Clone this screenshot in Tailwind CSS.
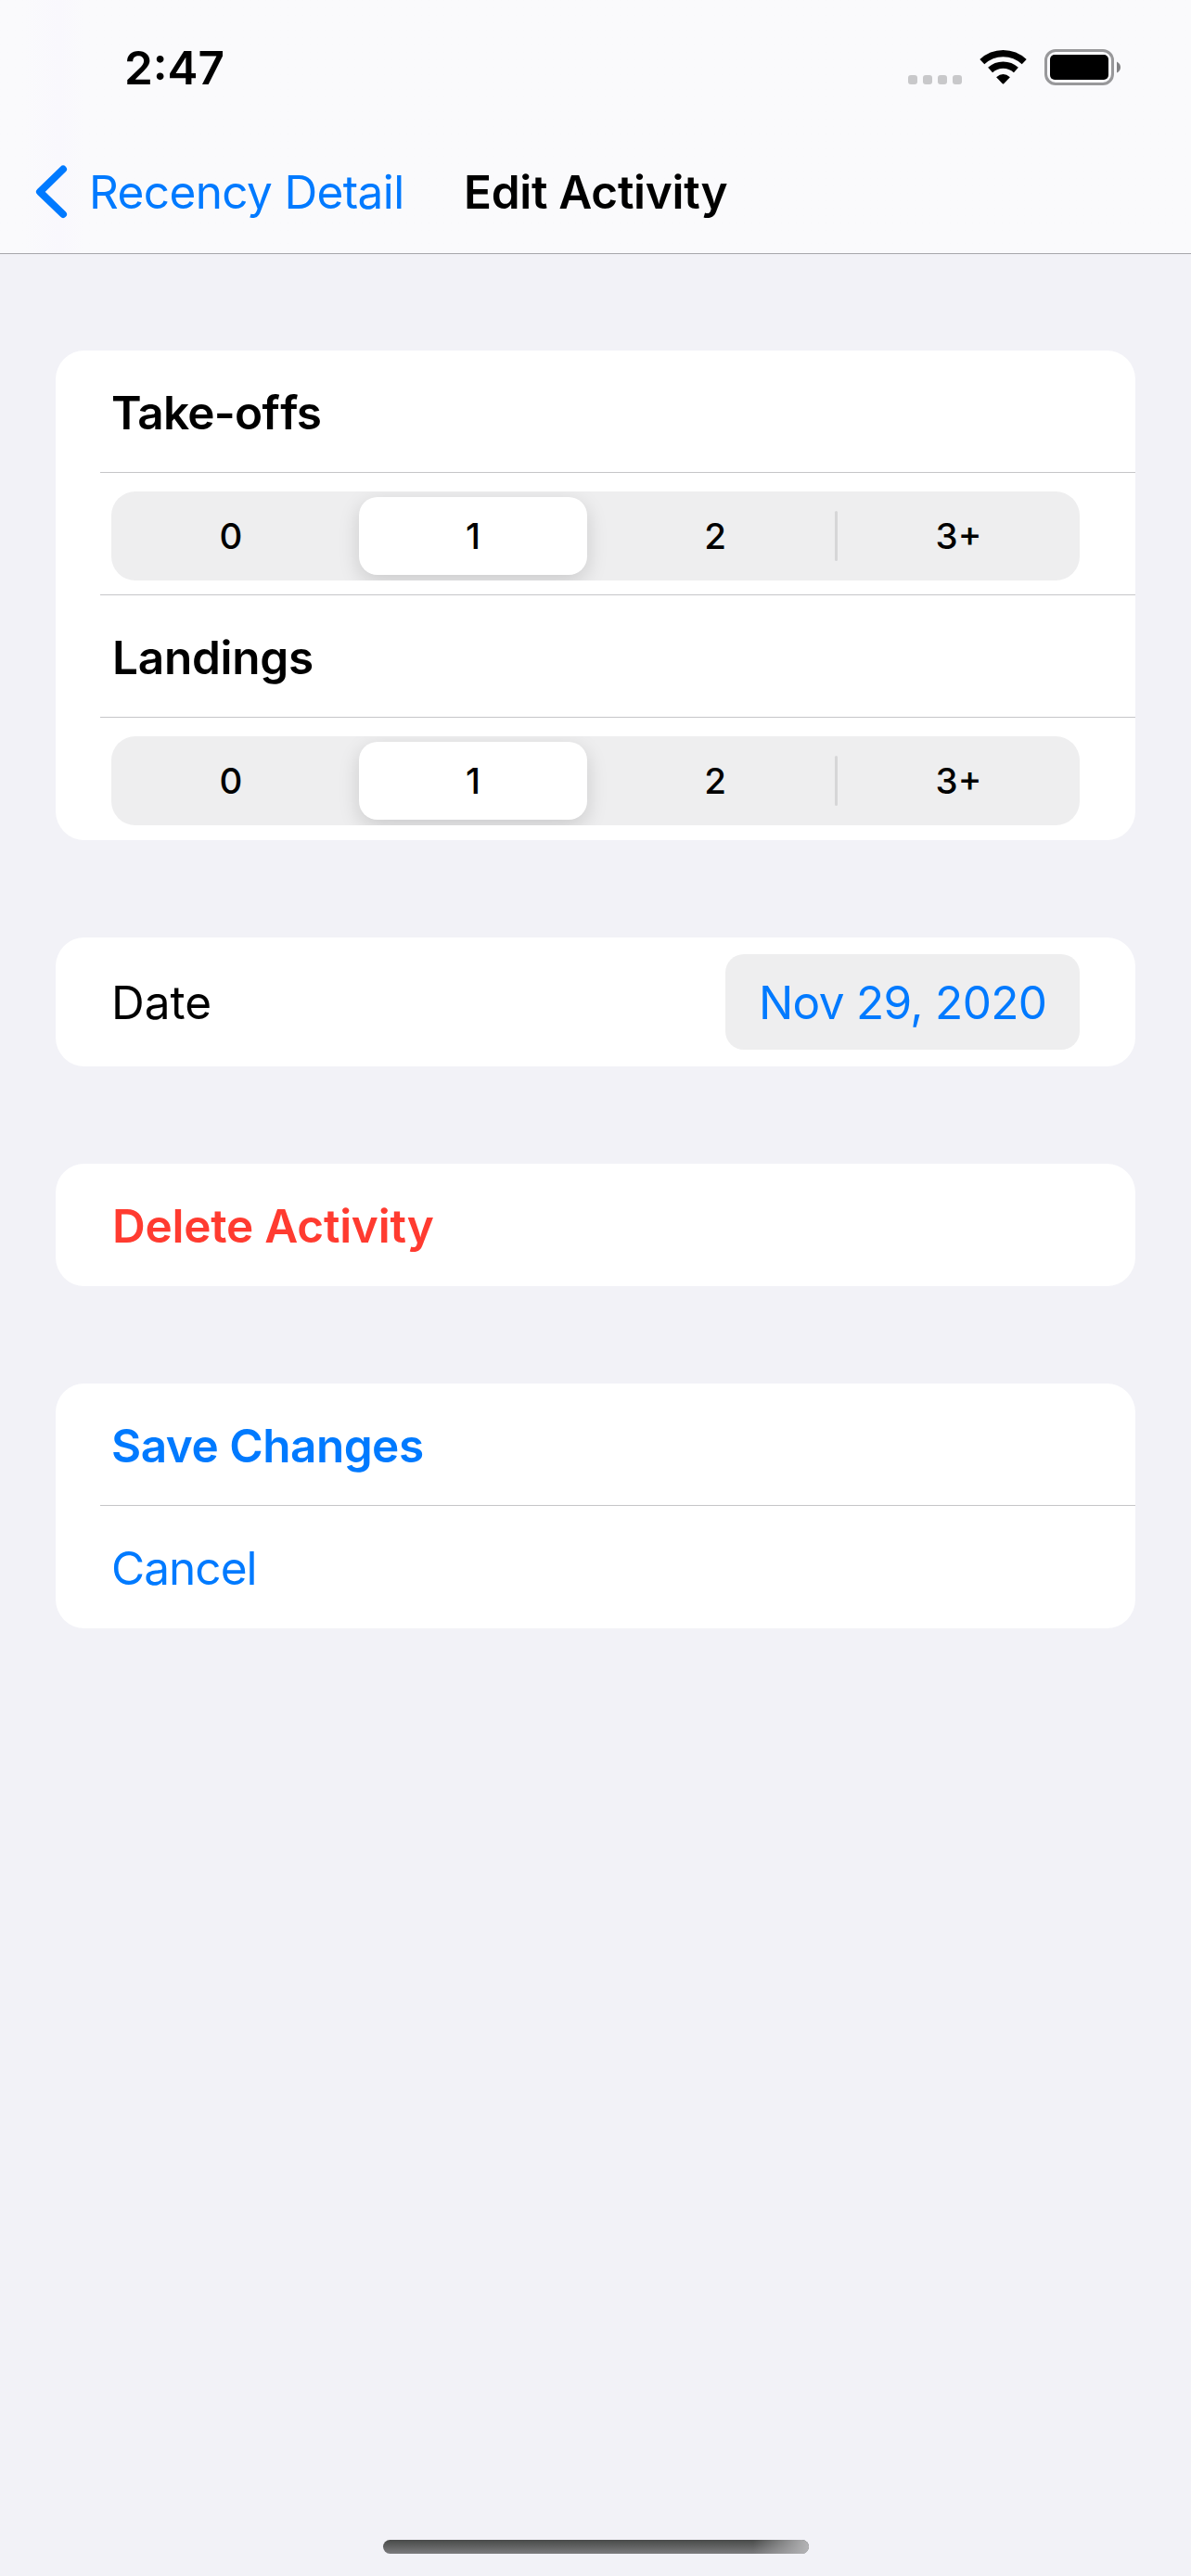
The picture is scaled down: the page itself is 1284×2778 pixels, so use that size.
<!DOCTYPE html>
<html lang="en">
<head>
<meta charset="utf-8">
<title>Edit Activity</title>
<script src="https://cdn.jsdelivr.net/npm/@tailwindcss/browser@4"></script>
</head>
<body class="flex h-[2778px] w-[1284px] flex-col overflow-hidden bg-[#f2f2f7] font-['Inter',sans-serif] text-[49.5px] leading-[60px] text-black">

<header class="h-[274px] shrink-0 border-b border-[#a7a6ab] bg-[#fafafc] bg-linear-to-r from-[#fafafc] from-[2%] via-[#f9f8fd] via-[5%] to-[#fafafc] to-[7%]">
  <!-- Status bar -->
  <div class="flex h-[141px] items-start pl-[134px] pr-[74px]">
    <time class="pt-[43px] font-semibold">2:47</time>
    <div class="ml-auto flex gap-1.5 pt-[81px]">
      <i class="size-2.5 rounded-[3px] bg-[#c8c8ca]"></i>
      <i class="size-2.5 rounded-[3px] bg-[#c8c8ca]"></i>
      <i class="size-2.5 rounded-[3px] bg-[#c8c8ca]"></i>
      <i class="size-2.5 rounded-[3px] bg-[#c8c8ca]"></i>
    </div>
    <svg class="ml-[19px] mt-[53px] h-[39px] w-[52px]" viewBox="0 0 52 39" fill="none">
      <path d="M2.8 13.6 A33 33 0 0 1 48.2 13.6" stroke="#000" stroke-width="7.2"/>
      <path d="M11.6 22.5 A20.4 20.4 0 0 1 39.4 22.5" stroke="#000" stroke-width="7.2"/>
      <path d="M18.1 30.3 Q25.5 23.6 32.9 30.3 L26.2 37.2 Q25.5 37.9 24.8 37.2 Z" fill="#000"/>
    </svg>
    <svg class="ml-[18px] mt-[53px] h-[39px] w-[84px]" viewBox="0 0 84 39" fill="none">
      <rect x="1.5" y="1.5" width="72" height="36" rx="10.5" stroke="#98989a" stroke-width="3"/>
      <rect x="6" y="6" width="63" height="27" rx="5" fill="#000"/>
      <path d="M78 13.5 Q82 15.5 82 19.5 Q82 23.5 78 25.5 Z" fill="#818183"/>
    </svg>
  </div>
  <!-- Navigation bar -->
  <nav class="flex items-start pl-[38px]">
    <svg class="mt-9 h-[60px] w-[38px]" viewBox="0 0 38 60" fill="none" stroke="#007aff" stroke-width="8" stroke-linecap="round" stroke-linejoin="round">
      <path d="M30 5.5 L5 29.8 L30 54"/>
    </svg>
    <a class="ml-5 w-[404px] whitespace-nowrap pt-9 tracking-[-0.62px] text-[#007aff]">Recency Detail</a>
    <h1 class="whitespace-nowrap pt-9 font-semibold tracking-[-0.28px]">Edit Activity</h1>
  </nav>
</header>

<main class="flex flex-col px-[60px] pt-[104px]">
  <section class="flex h-[528px] flex-col rounded-[31px] bg-white pl-12">
    <h2 class="h-[132px] border-b border-[#c6c6c8] pl-3 pt-[37px] font-semibold tracking-[-0.75px] [font-feature-settings:'calt'_0,'liga'_0]">Take-o<span class="tracking-[0.4px]">f</span><span>fs</span></h2>
    <div class="h-[132px] border-b border-[#c6c6c8] pl-3 pr-[60px] pt-5">
      <div class="flex h-24 items-center overflow-hidden rounded-[26px] bg-[#eeeeef] text-[38.5px] font-[450] leading-[46px]">
        <span class="w-[258px] text-center">0</span>
        <span class="ml-[9px] mr-[9px] flex h-[84px] w-[246px] items-center justify-center rounded-[20px] bg-white font-medium shadow-[0_7px_22px_rgba(0,0,0,0.15)]">1</span>
        <span class="w-[258px] text-center">2</span>
        <i class="h-[54px] w-[3px] rounded-full bg-[#d6d6d7]"></i>
        <span class="w-[261px] text-center">3+</span>
      </div>
    </div>
    <h2 class="h-[132px] border-b border-[#c6c6c8] pl-[13px] pt-[37px] font-semibold tracking-[-0.26px]">Landings</h2>
    <div class="h-[132px] pl-3 pr-[60px] pt-5">
      <div class="flex h-24 items-center overflow-hidden rounded-[26px] bg-[#eeeeef] text-[38.5px] font-[450] leading-[46px]">
        <span class="w-[258px] text-center">0</span>
        <span class="ml-[9px] mr-[9px] flex h-[84px] w-[246px] items-center justify-center rounded-[20px] bg-white font-medium shadow-[0_7px_22px_rgba(0,0,0,0.15)]">1</span>
        <span class="w-[258px] text-center">2</span>
        <i class="h-[54px] w-[3px] rounded-full bg-[#d6d6d7]"></i>
        <span class="w-[261px] text-center">3+</span>
      </div>
    </div>
  </section>

  <section class="mt-[105px] flex h-[139px] items-start justify-between rounded-[31px] bg-white px-[60px]">
    <span class="pt-10">Date</span>
    <button class="mt-[18px] h-[103px] w-[382px] whitespace-nowrap rounded-[20px] bg-[#eeeeef] pb-[21px] pl-9 pt-[22px] text-left tracking-[-0.68px] text-[#007aff]">Nov 29, 2020</button>
  </section>

  <section class="mt-[105px] h-[132px] rounded-[31px] bg-white pl-[61px] pt-[37px] font-semibold tracking-[-0.24px] text-[#ff3b30]">Delete Activity</section>

  <section class="mt-[105px] flex h-[264px] flex-col rounded-[31px] bg-white pl-12 text-[#007aff]">
    <div class="h-[132px] border-b border-[#c6c6c8] pl-3 pt-[37px] font-semibold tracking-[-0.5px]">Save Changes</div>
    <div class="h-[132px] pl-3 pt-[37px] tracking-[-0.95px]">Cancel</div>
  </section>
</main>

<!-- Home indicator -->
<footer class="mb-6 ml-[413px] mt-auto h-[15px] w-[459px] overflow-hidden rounded-full bg-linear-to-b from-[#484a49] to-[#7c7c7e]">
  <div class="ml-auto h-full w-[60px] bg-linear-to-r from-transparent to-[#b4b4b6]"></div>
</footer>
</body>
</html>
